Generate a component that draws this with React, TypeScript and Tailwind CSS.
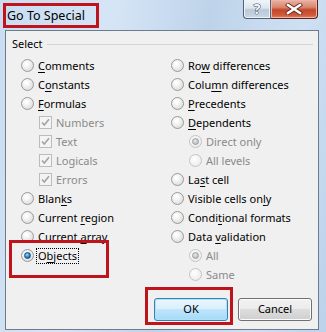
import React from 'react';

const font = { fontFamily: '"Noto Sans", "Open Sans", sans-serif' };

interface Item {
	text: string;
	u?: number; // index of the mnemonic letter
	kind?: 'radio' | 'check';
	sub?: boolean;
	disabled?: boolean;
	checked?: boolean;
	focus?: boolean;
}

const leftItems: Item[] = [
	{ text: 'Comments', u: 0 },
	{ text: 'Constants', u: 1 },
	{ text: 'Formulas', u: 0 },
	{ text: 'Numbers', kind: 'check', sub: true, disabled: true, checked: true },
	{ text: 'Text', kind: 'check', sub: true, disabled: true, checked: true },
	{ text: 'Logicals', kind: 'check', sub: true, disabled: true, checked: true },
	{ text: 'Errors', kind: 'check', sub: true, disabled: true, checked: true },
	{ text: 'Blanks', u: 4 },
	{ text: 'Current region', u: 8 },
	{ text: 'Current array', u: 8 },
	{ text: 'Objects', u: 1, checked: true, focus: true },
];

const rightItems: Item[] = [
	{ text: 'Row differences', u: 2 },
	{ text: 'Column differences', u: 4 },
	{ text: 'Precedents', u: 0 },
	{ text: 'Dependents', u: 0 },
	{ text: 'Direct only', sub: true, disabled: true, checked: true },
	{ text: 'All levels', sub: true, disabled: true },
	{ text: 'Last cell', u: 2 },
	{ text: 'Visible cells only', u: 16 },
	{ text: 'Conditional formats', u: 5 },
	{ text: 'Data validation', u: 5 },
	{ text: 'All', sub: true, disabled: true, checked: true },
	{ text: 'Same', sub: true, disabled: true },
];

const Radio = ({ checked, disabled }: { checked?: boolean; disabled?: boolean }) => (
	<span
		className={
			'flex h-[13px] w-[13px] shrink-0 items-center justify-center rounded-full border ' +
			(disabled
				? 'border-[#c4c4c4] bg-[radial-gradient(circle_at_40%_35%,#ffffff,#e6e6e6)]'
				: 'border-[#9a9a9a] bg-[radial-gradient(circle_at_40%_35%,#ffffff_10%,#d2d2d2)]')
		}
	>
		{checked && (
			<span
				className={
					'h-[7px] w-[7px] rounded-full ' +
					(disabled
						? 'border border-[#9c9c9c] bg-[radial-gradient(circle_at_40%_35%,#e8e8e8,#b0b0b0)]'
						: 'border border-[#1b4f7c] bg-[radial-gradient(circle_at_40%_35%,#9fdcff,#1a7cc4_60%,#0e4f88)]')
				}
			/>
		)}
	</span>
);

const Check = () => (
	<span className="flex h-[13px] w-[13px] shrink-0 items-center justify-center border border-[#bcbcbc] bg-[#f4f4f4]">
		<svg width="9" height="9" viewBox="0 0 9 9">
			<path d="M1 4.5 L3.3 7 L8 1.2" fill="none" stroke="#a3a3a3" strokeWidth="1.6" />
		</svg>
	</span>
);

const Label = ({ item }: { item: Item }) => {
	const { text, u } = item;
	const body =
		u === undefined ? (
			text
		) : (
			<>
				{text.slice(0, u)}
				<span className="underline decoration-1 underline-offset-[2px]">{text[u]}</span>
				{text.slice(u + 1)}
			</>
		);
	return (
		<span
			className={
				'whitespace-nowrap leading-[14px] ' +
				(item.disabled ? 'text-[#8a8a8a] ' : 'text-black ') +
				(item.focus ? 'outline-1 outline-dotted outline-black px-[1px] -ml-[1px]' : '')
			}
		>
			{body}
		</span>
	);
};

const Row = ({ item }: { item: Item }) => (
	<div className={'flex h-[19px] items-center gap-[4px] ' + (item.sub ? 'pl-[18px]' : '')}>
		{item.kind === 'check' ? <Check /> : <Radio checked={item.checked} disabled={item.disabled} />}
		<Label item={item} />
	</div>
);

const Button = ({ label, primary }: { label: string; primary?: boolean }) => (
	<button
		className={
			'flex h-[23px] w-[74px] items-center justify-center rounded-[3px] border text-[11px] text-black ' +
			(primary
				? 'border-[#3c7fb1] shadow-[inset_0_0_0_1px_#a7e3fb] bg-[linear-gradient(#eaf6fd_0%,#d9f0fc_50%,#bee6fd_50%,#a7d9f5_100%)]'
				: 'border-[#707070] shadow-[inset_0_0_0_1px_#fbfbfb] bg-[linear-gradient(#f2f2f2_0%,#ebebeb_50%,#dddddd_50%,#cfcfcf_100%)]')
		}
	>
		{label}
	</button>
);

const App = () => {
	return (
		<div
			className="relative h-[332px] w-[326px] overflow-hidden bg-[linear-gradient(100deg,#c9dcf1_0%,#d6e5f6_30%,#bed3ea_55%,#cfe0f3_80%,#bcd2ea_100%)]"
			style={font}
		>
			{/* --- Title bar --- */}
			<div className="flex h-[30px] items-start">
				<div className="pl-[7px] pt-[7px] text-[12.5px] leading-[17px] text-black">Go To Special</div>
				<div className="ml-auto mr-[8px] flex">
					<div className="flex h-[19px] w-[28px] items-center justify-center rounded-bl-[4px] border border-t-0 border-[#4d6178] bg-[linear-gradient(#f2f6fa_0%,#dbe4ee_45%,#bac8d8_55%,#cbd7e4_100%)] shadow-[inset_0_0_0_1px_#eef3f8]">
						<span className="text-[14px] font-bold leading-none text-[#f4f6f9] [-webkit-text-stroke:1px_#33465e] [paint-order:stroke_fill]">?</span>
					</div>
					<div className="flex h-[19px] w-[47px] items-center justify-center rounded-br-[4px] border border-l-0 border-t-0 border-[#5a231a] bg-[linear-gradient(#eab3a5_0%,#d98770_40%,#c2472b_55%,#d25a3a_85%,#e0886a_100%)] shadow-[inset_0_0_0_1px_#f0b4a4]">
						<svg width="18" height="12" viewBox="0 0 18 12">
							<path d="M3 2 L15 10 M15 2 L3 10" stroke="#5b2a22" strokeWidth="4.2" strokeLinecap="square" />
							<path d="M3 2 L15 10 M15 2 L3 10" stroke="#ffffff" strokeWidth="2.6" strokeLinecap="square" />
						</svg>
					</div>
				</div>
			</div>

			{/* --- Client area --- */}
			<div className="ml-[5px] mr-[7px] flex h-[300px] flex-col border border-[#6d7b8a] bg-[#f0f0f0] text-[11px]">
				<div className="mt-[6px] flex h-[14px] items-center gap-[4px] pl-[6px] pr-[5px]">
					<span className="leading-[14px] text-black">Select</span>
					<span className="h-px flex-1 bg-[#d5d5d5]" />
				</div>
				<div className="mt-[5px] flex pl-[15px]">
					<div className="flex w-[150px] flex-col">
						{leftItems.map((item) => (
							<Row key={item.text} item={item} />
						))}
					</div>
					<div className="flex flex-col">
						{rightItems.map((item, i) => (
							<Row key={item.text + i} item={item} />
						))}
					</div>
				</div>
				<div className="mt-auto mb-[8px] flex justify-end gap-[10px] pr-[6px]">
					<Button label="OK" primary />
					<Button label="Cancel" />
				</div>
			</div>

			{/* --- Annotations --- */}
			<div className="absolute left-[3px] top-[3px] h-[25px] w-[96px] border-[3px] border-[#c0141c]" />
			<div className="absolute left-[9px] top-[240px] h-[38px] w-[100px] border-[3px] border-[#c0141c]" />
			<div className="absolute left-[145px] top-[287px] h-[38px] w-[88px] border-[3px] border-[#c0141c]" />
		</div>
	);
};

export default App;
